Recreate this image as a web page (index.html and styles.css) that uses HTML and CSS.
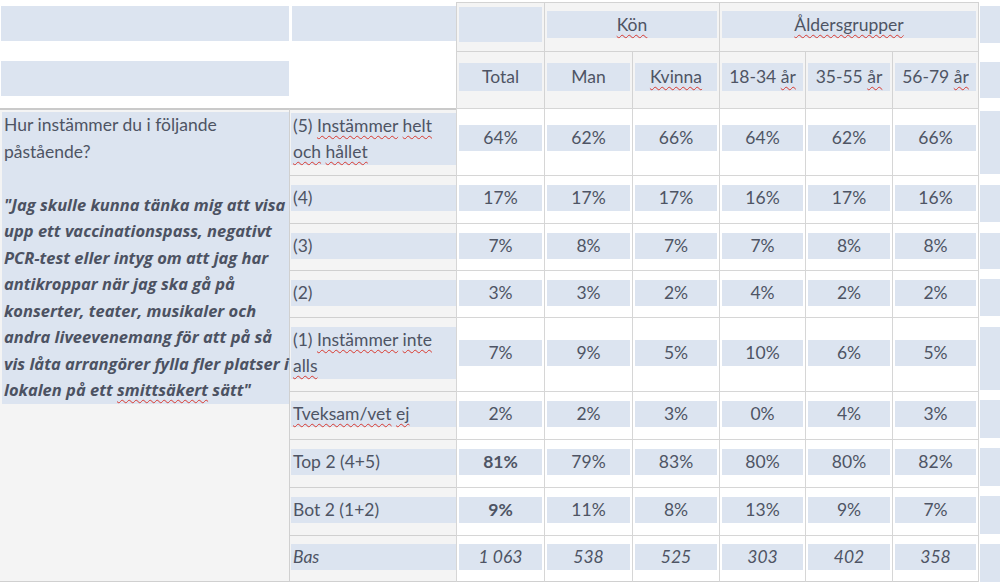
FILE: index.html
```html
<!DOCTYPE html>
<html lang="sv">
<head>
<meta charset="utf-8">
<title>Vaccinationspass – tabell</title>
<link rel="stylesheet" href="styles.css">
</head>
<body>
<div class="sheet">
  <!-- header row 1 -->
  <div class="cell hb hb1"><div class="band blk b0"></div></div>
  <div class="cell hb hb1"><div class="band blk b1"></div></div>
  <div class="cell dh dh1"><div class="band blk"></div></div>
  <div class="cell dh dh1 span2"><div class="band grp"><span class="sp">Kön</span></div></div>
  <div class="cell dh dh1 span3 last"><div class="band grp"><span class="sp">Åldersgrupper</span></div></div>
  <div class="end e1"><div class="mark"></div></div>

  <!-- header row 2 -->
  <div class="cell hb hb2"><div class="band blk b0"></div></div>
  <div class="cell hb"></div>
  <div class="cell dh dh2"><div class="band colh">Total</div></div>
  <div class="cell dh dh2"><div class="band colh">Man</div></div>
  <div class="cell dh dh2"><div class="band colh"><span class="sp">Kvinna</span></div></div>
  <div class="cell dh dh2"><div class="band colh">18-34 <span class="sp">år</span></div></div>
  <div class="cell dh dh2"><div class="band colh">35-55 <span class="sp">år</span></div></div>
  <div class="cell dh dh2 last"><div class="band colh">56-79 <span class="sp">år</span></div></div>
  <div class="end e2"><div class="mark"></div></div>

  <!-- question (merged) -->
  <div class="cell question">
    <div class="band qband">
      <p class="q">Hur instämmer du i följande<br>påstående?</p>
      <p class="quote">"Jag skulle kunna tänka mig att visa<br>upp ett vaccinationspass, negativt<br>PCR-test eller intyg om att jag har<br>antikroppar när jag ska gå på<br>konserter, teater, musikaler och<br>andra liveevenemang för att på så<br>vis låta arrangörer fylla fler platser i<br>lokalen på ett <span class="sp">smittsäkert</span> sätt"</p>
    </div>
  </div>

  <!-- (5) -->
  <div class="cell lab first tallrow"><div class="band"><span>(5) <span class="sp">Instämmer</span> <span class="sp">helt</span></span><br><span class="sp">och</span> <span class="sp">hållet</span></div></div>
  <div class="cell dat tallrow"><div class="band">64%</div></div>
  <div class="cell dat tallrow"><div class="band">62%</div></div>
  <div class="cell dat tallrow"><div class="band">66%</div></div>
  <div class="cell dat tallrow"><div class="band">64%</div></div>
  <div class="cell dat tallrow"><div class="band">62%</div></div>
  <div class="cell dat tallrow last"><div class="band">66%</div></div>
  <div class="end e3"><div class="mark"></div></div>

  <!-- (4) -->
  <div class="cell lab"><div class="band">(4)</div></div>
  <div class="cell dat"><div class="band">17%</div></div>
  <div class="cell dat"><div class="band">17%</div></div>
  <div class="cell dat"><div class="band">17%</div></div>
  <div class="cell dat"><div class="band">16%</div></div>
  <div class="cell dat"><div class="band">17%</div></div>
  <div class="cell dat last"><div class="band">16%</div></div>
  <div class="end e4"><div class="mark"></div></div>

  <!-- (3) -->
  <div class="cell lab"><div class="band">(3)</div></div>
  <div class="cell dat"><div class="band">7%</div></div>
  <div class="cell dat"><div class="band">8%</div></div>
  <div class="cell dat"><div class="band">7%</div></div>
  <div class="cell dat"><div class="band">7%</div></div>
  <div class="cell dat"><div class="band">8%</div></div>
  <div class="cell dat last"><div class="band">8%</div></div>
  <div class="end e4"><div class="mark"></div></div>

  <!-- (2) -->
  <div class="cell lab"><div class="band">(2)</div></div>
  <div class="cell dat"><div class="band">3%</div></div>
  <div class="cell dat"><div class="band">3%</div></div>
  <div class="cell dat"><div class="band">2%</div></div>
  <div class="cell dat"><div class="band">4%</div></div>
  <div class="cell dat"><div class="band">2%</div></div>
  <div class="cell dat last"><div class="band">2%</div></div>
  <div class="end"><div class="mark"></div></div>

  <!-- (1) -->
  <div class="cell lab"><div class="band">(1) <span class="sp">Instämmer</span> <span class="sp">inte</span><br><span class="sp">alls</span></div></div>
  <div class="cell dat"><div class="band">7%</div></div>
  <div class="cell dat"><div class="band">9%</div></div>
  <div class="cell dat"><div class="band">5%</div></div>
  <div class="cell dat"><div class="band">10%</div></div>
  <div class="cell dat"><div class="band">6%</div></div>
  <div class="cell dat last"><div class="band">5%</div></div>
  <div class="end e4"><div class="mark"></div></div>

  <!-- Tveksam -->
  <div class="cell lab"><div class="band"><span class="sp">Tveksam/vet</span> <span class="sp">ej</span></div></div>
  <div class="cell dat"><div class="band">2%</div></div>
  <div class="cell dat"><div class="band">2%</div></div>
  <div class="cell dat"><div class="band">3%</div></div>
  <div class="cell dat"><div class="band">0%</div></div>
  <div class="cell dat"><div class="band">4%</div></div>
  <div class="cell dat last"><div class="band">3%</div></div>
  <div class="end"><div class="mark"></div></div>

  <!-- Top 2 -->
  <div class="cell lab"><div class="band">Top 2 (4+5)</div></div>
  <div class="cell dat"><div class="band b">81%</div></div>
  <div class="cell dat"><div class="band">79%</div></div>
  <div class="cell dat"><div class="band">83%</div></div>
  <div class="cell dat"><div class="band">80%</div></div>
  <div class="cell dat"><div class="band">80%</div></div>
  <div class="cell dat last"><div class="band">82%</div></div>
  <div class="end"><div class="mark"></div></div>

  <!-- Bot 2 -->
  <div class="cell lab"><div class="band">Bot 2 (1+2)</div></div>
  <div class="cell dat"><div class="band b">9%</div></div>
  <div class="cell dat"><div class="band">11%</div></div>
  <div class="cell dat"><div class="band">8%</div></div>
  <div class="cell dat"><div class="band">13%</div></div>
  <div class="cell dat"><div class="band">9%</div></div>
  <div class="cell dat last"><div class="band">7%</div></div>
  <div class="end"><div class="mark"></div></div>

  <!-- Bas -->
  <div class="cell lab bottom"><div class="band i">Bas</div></div>
  <div class="cell dat bottom"><div class="band i">1 063</div></div>
  <div class="cell dat bottom"><div class="band i">538</div></div>
  <div class="cell dat bottom"><div class="band i">525</div></div>
  <div class="cell dat bottom"><div class="band i">303</div></div>
  <div class="cell dat bottom"><div class="band i">402</div></div>
  <div class="cell dat bottom last"><div class="band i">358</div></div>
  <div class="end elast"><div class="mark"></div></div>
</div>
</body>
</html>
```

FILE: styles.css
```css
* {
  box-sizing: border-box;
  margin: 0;
  padding: 0;
}

html,
body {
  background: #ffffff;
}

body {
  font-family: Lato, "Open Sans", sans-serif;
  font-size: 17.5px;
  color: #4e5464;
  overflow: hidden;
}

.sheet {
  display: grid;
  grid-template-columns: 290px 166px 88px 88px 87px 86px 87px 87px 21px;
  grid-template-rows: 49px 57px 67px 48px 47px 47px 74px 48px 48px 48px 47px;
  width: 1000px;
  margin-top: 2px;
}

.cell {
  display: flex;
  flex-direction: column;
  justify-content: center;
  min-width: 0;
}

.band {
  background: #dce4f0;
  line-height: 26px;
  white-space: nowrap;
}

.b { font-weight: 700; }
.i { font-style: italic; }

.sp {
  text-decoration-line: underline;
  text-decoration-style: wavy;
  text-decoration-color: #d8392f;
  text-decoration-thickness: 1px;
  text-underline-offset: 3px;
  text-decoration-skip-ink: none;
}

/* header, left blank cells */
.hb {
  background: #ffffff;
}
.hb1 { padding-bottom: 6px; }
.hb2 { padding-bottom: 2px; }
.blk { height: 35px; }
.b0 { margin: 0 1px 0 1px; }
.b1 { margin-left: 2px; }

/* data header cells */
.dh {
  background: #f4f4f4;
  border-top: 1px solid #d3d3d3;
  border-left: 1px solid #d3d3d3;
  padding: 0 2px 6px 2px;
  text-align: center;
}
.dh.last { border-right: 1px solid #d3d3d3; }
.span2 { grid-column: span 2; }
.span3 { grid-column: span 3; }
.grp { line-height: 27px; }
.colh { line-height: 28px; }

/* question cell */
.question {
  grid-row: 3 / span 9;
  grid-column: 1;
  justify-content: flex-start;
  background: #f4f4f4;
  border-top: 2px solid #cacaca;
  border-right: 1px solid #d0d0d0;
  border-bottom: 1px solid #d0d0d0;
  padding-top: 2px;
}
.qband {
  margin-left: 2px;
  padding-left: 2px;
  line-height: 26.5px;
}
.q { margin-bottom: 26.5px; }
.quote {
  font-family: "Open Sans", Lato, sans-serif;
  font-size: 16.5px;
  font-weight: 700;
  font-style: italic;
  color: #4c5262;
}

/* label cells */
.lab {
  background: #f4f4f4;
  border-top: 1px solid #d0d0d0;
  padding: 0 0 3px 1px;
}
.lab .band { padding-left: 2px; }
.lab.first { border-top: 2px solid #cacaca; }

/* data body cells */
.dat {
  background: #ffffff;
  border-top: 1px solid #d6d6d6;
  border-left: 1px solid #d6d6d6;
  padding: 0 2px 3px 2px;
  text-align: center;
}
.dat.last { border-right: 1px solid #d6d6d6; }

.tallrow { padding-bottom: 8px; }
.bottom { border-bottom: 1px solid #d0d0d0; }

/* row-end marks outside the table */
.end {
  display: flex;
  flex-direction: column;
  padding: 9px 0 1px 1px;
}
.mark {
  flex: 1;
  background: #dce4f0;
}
.e1 { padding-top: 4px; padding-bottom: 8px; }
.e2 { padding-top: 11px; padding-bottom: 10px; }
.e3 { padding-top: 3px; }
.e4 { padding-top: 10px; }
.elast { padding-bottom: 0; margin-bottom: -2px; }
```
